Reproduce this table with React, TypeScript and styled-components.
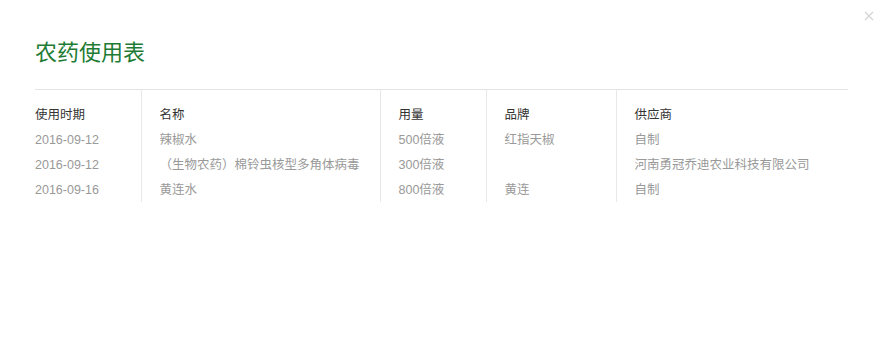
import * as React from 'react'
import styled, { createGlobalStyle } from 'styled-components'

const GlobalStyle = createGlobalStyle`
  html, body {
    margin: 0;
    padding: 0;
    background: #fff;
  }
  body {
    font-family: "Liberation Sans", Arial, "Noto Sans CJK SC", sans-serif;
  }
`

type Row = {
  date: string
  name: string
  amount: string
  brand: string
  supplier: string
}

const rows: Row[] = [
  { date: '2016-09-12', name: '辣椒水', amount: '500倍液', brand: '红指天椒', supplier: '自制' },
  {
    date: '2016-09-12',
    name: '（生物农药）棉铃虫核型多角体病毒',
    amount: '300倍液',
    brand: '',
    supplier: '河南勇冠乔迪农业科技有限公司',
  },
  { date: '2016-09-16', name: '黄连水', amount: '800倍液', brand: '黄连', supplier: '自制' },
]

const columns = [
  { key: 'date', title: '使用时期', width: 106 },
  { key: 'name', title: '名称', width: 239 },
  { key: 'amount', title: '用量', width: 106 },
  { key: 'brand', title: '品牌', width: 130 },
  { key: 'supplier', title: '供应商', width: 232 },
] as const

const Dialog = styled.div`
  position: relative;
  width: 880px;
  height: 351px;
  padding: 35px 32px 0 35px;
  box-sizing: border-box;
  background: #fff;
`

const Close = styled.button`
  position: absolute;
  top: 9px;
  right: 4px;
  width: 14px;
  height: 14px;
  padding: 0;
  border: 0;
  background: none;
  display: flex;
  align-items: center;
  justify-content: center;
  cursor: pointer;
`

const Title = styled.h2`
  margin: 0;
  height: 54px;
  font-size: 22px;
  line-height: 30px;
  font-weight: normal;
  color: #1e7b34;
  font-family: "Noto Sans CJK SC", sans-serif;
`

const Table = styled.table`
  width: 813px;
  border-collapse: collapse;
  table-layout: fixed;
  border-top: 1px solid #e3e3e3;
`

const Cell = styled.td<{ $first?: boolean; $head?: boolean }>`
  height: ${({ $head }) => ($head ? '37px' : '25px')};
  padding: ${({ $head, $first }) => `${$head ? '14px' : '2px'} 0 0 ${$first ? '0' : '18px'}`};
  box-sizing: border-box;
  border-left: ${({ $first }) => ($first ? 'none' : '1px solid #e8e8e8')};
  font-size: 12.5px;
  font-weight: normal;
  line-height: 23px;
  color: ${({ $head }) => ($head ? '#333' : '#999')};
  white-space: nowrap;
  vertical-align: top;
  text-align: left;
`

export default function App() {
  return (
    <>
      <GlobalStyle />
      <Dialog>
        <Close aria-label="关闭">
          <svg width="10" height="10" viewBox="0 0 10 10">
            <path d="M1 1L9 9M9 1L1 9" stroke="#d4d4d4" strokeWidth="1.2" fill="none" />
          </svg>
        </Close>
        <Title>农药使用表</Title>
        <Table>
          <colgroup>
            {columns.map((c) => (
              <col key={c.key} style={{ width: c.width }} />
            ))}
          </colgroup>
          <thead>
            <tr>
              {columns.map((c, i) => (
                <Cell as="th" key={c.key} $head $first={i === 0}>
                  {c.title}
                </Cell>
              ))}
            </tr>
          </thead>
          <tbody>
            {rows.map((r, ri) => (
              <tr key={ri}>
                {columns.map((c, i) => (
                  <Cell key={c.key} $first={i === 0}>
                    {r[c.key]}
                  </Cell>
                ))}
              </tr>
            ))}
          </tbody>
        </Table>
      </Dialog>
    </>
  )
}
